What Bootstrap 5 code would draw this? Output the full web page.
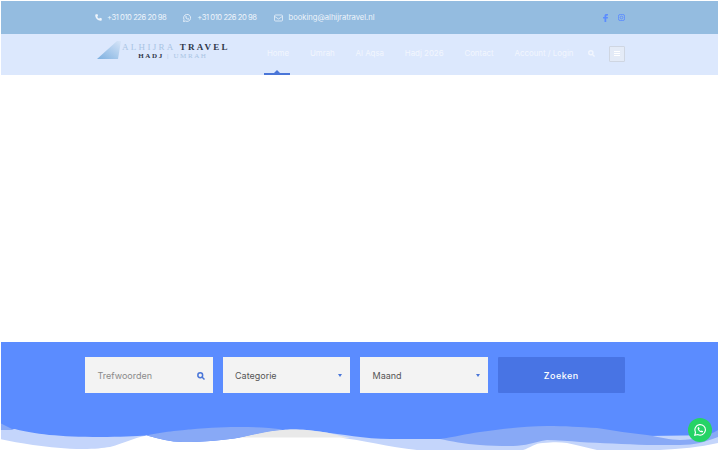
<!DOCTYPE html>
<html lang="nl"><head><meta charset="utf-8">
<link href="https://cdn.jsdelivr.net/npm/bootstrap@5.3.0/dist/css/bootstrap.min.css" rel="stylesheet">
<style>
html,body{height:450px;overflow:hidden;background:#fff}
body{font-family:"Inter","Open Sans",sans-serif;position:relative}
.page-wrap{margin:1px 2px 0 1px;height:449px;display:flex;flex-direction:column}
.inner-w{width:540px;margin-left:84px}
.topbar{height:33px;background:#94bce0;color:#eef4fb;font-size:7.6px;padding-left:10px;padding-top:1px}
.topbar .inner-w{width:530px}
.tb-item svg{display:block}
.tb-phone{letter-spacing:-.44px}
.gap-a{gap:5px}.gap-b{gap:6px;margin-left:17px}
.social-set{gap:10px;padding-right:0}
.mainnav{height:41px;background:#dce8fd;position:relative;font-size:7.9px;color:#f2f6fe}
.logo-box{width:169px;padding-left:12px;gap:1px;margin-top:-6px;margin-bottom:0}
.logo-mark{margin-top:-3px}
.logo-l1{font-family:"Liberation Serif",serif;font-size:9px;letter-spacing:2.3px;line-height:9px;color:#a9c4e4;white-space:nowrap}
.logo-l1 b{color:#30384a;font-weight:700}
.logo-l2{font-family:"Liberation Serif",serif;font-size:7px;letter-spacing:1.6px;line-height:8px;text-align:center;color:#a9c4e4;white-space:nowrap;padding-right:6px}
.logo-l2 b{color:#30384a}
.menu-links{gap:20.8px;padding-left:13px;margin-top:-2px}
.menu-a{color:#f2f6fe;text-decoration:none;white-space:nowrap;display:block}
.home-mark{position:absolute;left:263px;bottom:0;width:26px;height:2px;background:#4a76d8}
.home-mark::after{content:"";position:absolute;left:10px;top:-3px;border:3px solid transparent;border-top:0;border-bottom-color:#4a76d8}
.srch-ico{margin-top:-2px}
.tog-box{width:16px;height:16px;border:1px solid #cfd6e2;background:#e4ebf7;margin-left:14px;border-radius:1px;gap:1px;margin-top:-2px}
.tog-box i{display:block;width:6px;height:1px;background:#fff}
.spacer-w{flex:1 1 auto}
.searchband{height:108px;background:#5b8cff;position:relative;overflow:hidden;padding-top:15px}
.search-row{--bs-gutter-x:10px;--bs-gutter-y:0}
.sfield{height:36px;background:#f3f3f3;color:#555;font-size:9px;padding:1px 8px 0 12.500px}
.sfield.ph{color:#8a8a8a}
.caret-s{width:0;height:0;border:2.500px solid transparent;border-top:3px solid #4a76d8;border-bottom:0}
.go-btn{height:36px;background:#4874e4;color:#fff;font-size:9px;font-weight:500;letter-spacing:.5px;border:0;border-radius:1px;width:100%;padding-top:2px}
.wave-svg{position:absolute;left:0;bottom:0;width:717px;height:35px;display:block}
.wa-float{position:absolute;left:688px;top:418px;width:24px;height:24px;border-radius:50%;background:#25d366}
</style></head><body>
<div class="page-wrap">
<div class="topbar d-flex align-items-center">
<div class="inner-w d-flex align-items-center">
<div class="tb-item gap-a d-flex align-items-center"><svg width="7" height="7" viewBox="0 0 16 16"><path fill="#eef4fb" d="M3 .5 6 .8l1 4-2 1.400c1 2 2.500 3.500 4.600 4.600L11 8.800l4.200 1 .3 3.200c0 1.300-1.300 2.500-2.500 2.500C6.500 15.500.5 9.500.5 3 .5 1.800 1.700.6 3 .5z"/></svg><span class="tb-phone">+31 010 226 20 98</span></div>
<div class="tb-item gap-b d-flex align-items-center"><svg width="8" height="8" viewBox="0 0 16 16"><path fill="none" stroke="#eef4fb" stroke-width="1.700" d="M1 15l1-4A7 7 0 1 1 5 14z"/><path fill="#eef4fb" d="M5 4.500l1.500-.5 1 2.200-.8 1c.6 1 1.400 1.700 2.500 2.200l1-.9 2 1-.3 1.400c-2.800 1.200-8-3-6.900-6.400z"/></svg><span class="tb-phone">+31 010 226 20 98</span></div>
<div class="tb-item gap-b d-flex align-items-center"><svg width="9" height="8" viewBox="0 0 18 16"><rect x="1" y="2" width="16" height="12" rx="2" fill="none" stroke="#eef4fb" stroke-width="1.500"/><path d="M1.500 5 9 10l7.500-5" fill="none" stroke="#eef4fb" stroke-width="1.500"/></svg><span>booking@alhijratravel.nl</span></div>
<div class="ms-auto d-flex align-items-center social-set"><svg width="5" height="8" viewBox="0 0 10 16"><path fill="#5b8cff" d="M3 16V9H0V6h3V4c0-3 1.700-4 4-4h3v3H8C7 3 6.500 3.500 6.500 4.500V6H10l-.5 3h-3v7z"/></svg><svg width="7" height="7" viewBox="0 0 16 16"><rect x="1" y="1" width="14" height="14" rx="4" fill="none" stroke="#5b8cff" stroke-width="2"/><circle cx="8" cy="8" r="3.200" fill="none" stroke="#5b8cff" stroke-width="2"/></svg></div>
</div></div>
<nav class="mainnav d-flex align-items-center">
<div class="inner-w d-flex align-items-center">
<div class="logo-box d-flex align-items-center">
<svg class="logo-mark" width="24" height="18" viewBox="0 0 24 18"><defs><linearGradient id="lg" x1="0" y1="1" x2="1" y2="0"><stop offset="0" stop-color="#7db0e0"/><stop offset="1" stop-color="#d7e5f8"/></linearGradient></defs><polygon points="0,18 20,0 24,0 21,18" fill="url(#lg)"/></svg>
<div><div class="logo-l1">ALHIJRA <b>TRAVEL</b></div><div class="logo-l2"><b>HADJ</b> | UMRAH</div></div>
</div>
<div class="menu-links d-flex align-items-center flex-grow-1">
<a class="menu-a" href="#">Home</a><a class="menu-a" href="#">Umrah</a><a class="menu-a" href="#">Al Aqsa</a><a class="menu-a" href="#">Hadj 2026</a><a class="menu-a" href="#">Contact</a><a class="menu-a" href="#">Account / Login</a>
</div>
<svg class="srch-ico" width="7" height="7" viewBox="0 0 16 16"><circle cx="6.500" cy="6.500" r="4.800" fill="none" stroke="#f2f6fe" stroke-width="3"/><path d="M10 10l5 5" stroke="#f2f6fe" stroke-width="3"/></svg>
<div class="tog-box d-flex flex-column justify-content-center align-items-center"><i></i><i></i><i></i></div>
</div>
<div class="home-mark"></div>
</nav>
<div class="spacer-w"></div>
<section class="searchband">
<div class="inner-w"><div class="row search-row">
<div class="col-3"><div class="sfield ph d-flex align-items-center justify-content-between"><span>Trefwoorden</span><svg width="8" height="8" viewBox="0 0 16 16"><circle cx="6.500" cy="6.500" r="4.800" fill="none" stroke="#4a76d8" stroke-width="3"/><path d="M10 10l5 5" stroke="#4a76d8" stroke-width="3"/></svg></div></div>
<div class="col-3"><div class="sfield d-flex align-items-center justify-content-between"><span>Categorie</span><i class="caret-s"></i></div></div>
<div class="col-3"><div class="sfield d-flex align-items-center justify-content-between"><span>Maand</span><i class="caret-s"></i></div></div>
<div class="col-3"><button class="go-btn" type="button">Zoeken</button></div>
</div></div>
<svg class="wave-svg" viewBox="1 0 717 35" preserveAspectRatio="none">
<path fill="#c4d5fb" d="M0 14L15 14C33 19 60 22 100 22C120 22 135 21 147 20.500L147 35L0 35Z"/>
<path fill="#c4d5fb" d="M283 15C300 14 310 15 323 17C340 19 365 24 390 24L440 24L718 20L718 35L283 35Z"/>
<path fill="#e9e9e9" d="M240 22.500C255 19 270 15 283 15C290 14 305 14 323 17C335 19 345 22 350 23L240 23Z"/>
<path fill="#fff" d="M0 24C10 26 20 28 33 30C50 32 65 34 83 34C95 34 103 33 110 32C125 28 133 23 147 20.500C160 24 170 27 183 27C205 27 225 25 240 22.500L340 22.500C360 25 390 32 417 35L523 35C530 33 535 28 543 28C553 27 560 27 567 28C578 30 587 33 597 35L660 35C680 34 700 32 718 28L718 35L0 35Z"/>
<path fill="#88a9f6" d="M0 8L14 15L0 15Z"/>
<path fill="#88a9f6" d="M147 20.500C160 17 183 15 190 14.500C210 12.500 230 12 240 12C255 12 270 13 283 14.500C270 16 255 19 240 22.500C225 25 205 27 183 27C170 27 160 24 147 20.500Z"/>
<path fill="#88a9f6" d="M440 24C455 22 465 19 480 17C505 14 525 11 547 11C565 11 580 12 597 13C615 16 630 18 647 20C660 22 670 25 680 25C695 25 708 21 718 15L718 22C705 27 695 30 680 30L647 30C625 29 600 28 580 27C570 26 557 25 547 25C535 27 525 31 513 31C500 31 490 31 480 30C465 29 450 26 440 24Z"/>
</svg>
</section>
</div>
<a class="wa-float d-flex align-items-center justify-content-center" href="#" aria-label="WhatsApp"><svg width="12" height="12" viewBox="0 0 16 16"><path fill="none" stroke="#fff" stroke-width="1.500" d="M1 15l1-4A7 7 0 1 1 5 14z"/><path fill="#fff" d="M5 4.500l1.500-.5 1 2.200-.8 1c.6 1 1.400 1.700 2.500 2.200l1-.9 2 1-.3 1.400c-2.800 1.200-8-3-6.900-6.400z"/></svg></a>
</body></html>
